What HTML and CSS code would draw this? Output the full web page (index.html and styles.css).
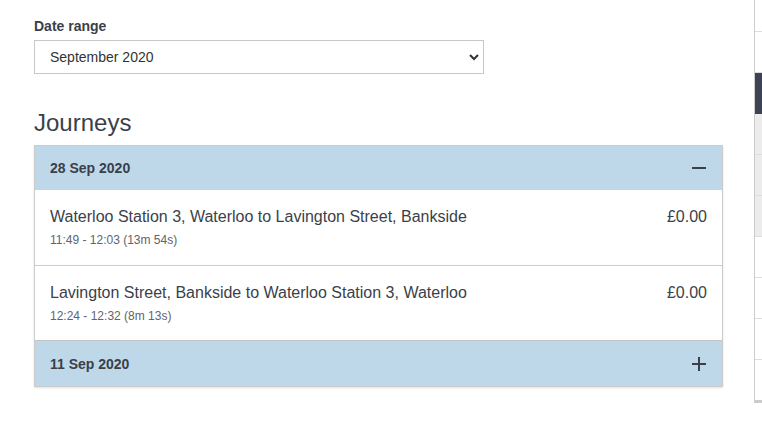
FILE: index.html
```html
<!DOCTYPE html>
<html lang="en">
<head>
    <meta charset="UTF-8">
    <meta name="viewport" content="width=device-width, initial-scale=1.0">
    <title>Journeys</title>
    <link rel="stylesheet" href="styles.css">
</head>
<body>
    <div class="page">
        <main class="content">
            <label class="field-label" for="date-range">Date range</label>
            <div class="select-wrap">
                <select id="date-range" class="select">
                    <option>September 2020</option>
                    <option>August 2020</option>
                </select>
                <svg class="select-arrow" width="12" height="8" viewBox="0 0 12 8">
                    <path d="M2 2 L6 6 L10 2" fill="none" stroke="#333" stroke-width="2"/>
                </svg>
            </div>

            <h2 class="heading">Journeys</h2>

            <div class="accordion">
                <div class="day open">
                    <div class="day-header">
                        <span>28 Sep 2020</span>
                        <span class="toggle minus"></span>
                    </div>
                    <div class="journey">
                        <div class="journey-info">
                            <div class="journey-title">Waterloo Station 3, Waterloo to Lavington Street, Bankside</div>
                            <div class="journey-time">11:49 - 12:03 (13m 54s)</div>
                        </div>
                        <div class="journey-price">£0.00</div>
                    </div>
                    <div class="journey">
                        <div class="journey-info">
                            <div class="journey-title">Lavington Street, Bankside to Waterloo Station 3, Waterloo</div>
                            <div class="journey-time">12:24 - 12:32 (8m 13s)</div>
                        </div>
                        <div class="journey-price">£0.00</div>
                    </div>
                </div>
                <div class="day">
                    <div class="day-header">
                        <span>11 Sep 2020</span>
                        <span class="toggle plus"></span>
                    </div>
                </div>
            </div>
        </main>

        <aside class="sidebar">
            <div class="side-row top"></div>
            <div class="side-row"></div>
            <div class="side-row dark"></div>
            <div class="side-row grey"></div>
            <div class="side-row grey"></div>
            <div class="side-row grey"></div>
            <div class="side-row"></div>
            <div class="side-row"></div>
            <div class="side-row"></div>
            <div class="side-row last"></div>
        </aside>
    </div>
</body>
</html>
```

FILE: styles.css
```css
body {
    margin: 0;
    background-color: #fff;
    color: #3b3f4a;
    font-family: "Liberation Sans", Arial, sans-serif;
    overflow: hidden;
}

.page {
    display: flex;
    width: 762px;
    height: 425px;
    overflow: hidden;
}

.content {
    width: 689px;
    flex-shrink: 0;
    padding: 16px 31px 0 34px;
}

.field-label {
    display: block;
    font-size: 14px;
    font-weight: bold;
    line-height: 20px;
    margin-bottom: 4px;
}

.select-wrap {
    position: relative;
    width: 450px;
}

.select {
    appearance: none;
    -webkit-appearance: none;
    display: block;
    width: 450px;
    height: 34px;
    margin: 0;
    padding: 0 15px;
    border: 1px solid #c8c8c8;
    border-radius: 0;
    background-color: #fff;
    color: #333;
    font-family: "Liberation Sans", Arial, sans-serif;
    font-size: 14px;
}

.select-arrow {
    position: absolute;
    right: 4px;
    top: 13px;
    pointer-events: none;
}

.heading {
    margin: 34px 0 8px;
    font-size: 24px;
    font-weight: normal;
    line-height: 29px;
}

.accordion {
    border: 1px solid #ccc;
    box-shadow: 0 1px 2px rgba(0, 0, 0, 0.12);
}

.day-header {
    display: flex;
    justify-content: space-between;
    align-items: center;
    height: 44px;
    padding: 0 16px 0 15px;
    background-color: #bed8e9;
    font-size: 14px;
    font-weight: bold;
}

.day + .day .day-header {
    border-top: 1px solid #c4c4c4;
    height: 45px;
}

.toggle {
    position: relative;
    width: 14px;
    height: 14px;
}

.toggle::before,
.toggle::after {
    content: "";
    position: absolute;
    background-color: #3b3f4a;
}

.toggle::before {
    left: 0;
    right: 0;
    top: 6px;
    height: 2px;
}

.plus::after {
    top: 0;
    bottom: 0;
    left: 6px;
    width: 2px;
}

.journey {
    display: flex;
    justify-content: space-between;
    align-items: flex-start;
    padding: 16px 15px 16px 15px;
    background-color: #fff;
}

.journey + .journey {
    border-top: 1px solid #ccc;
    padding-bottom: 15px;
}

.journey-title {
    font-size: 16px;
    line-height: 22px;
    color: #3b3f4a;
}

.journey-time {
    margin-top: 3px;
    font-size: 12px;
    line-height: 18px;
    color: #60646c;
}

.journey-price {
    font-size: 16px;
    line-height: 22px;
    color: #3b3f4a;
}

.sidebar {
    width: 200px;
    flex-shrink: 0;
    border-left: 1px solid #ccc;
    height: 403px;
}

.side-row {
    height: 40px;
    border-bottom: 1px solid #ddd;
}

.side-row.top {
    height: 31px;
}

.side-row.dark {
    height: 41px;
    background-color: #3e4354;
    border-bottom: none;
}

.side-row.grey {
    background-color: #ececec;
}

.side-row.last {
    border-bottom: 3px solid #ccc;
}
```
